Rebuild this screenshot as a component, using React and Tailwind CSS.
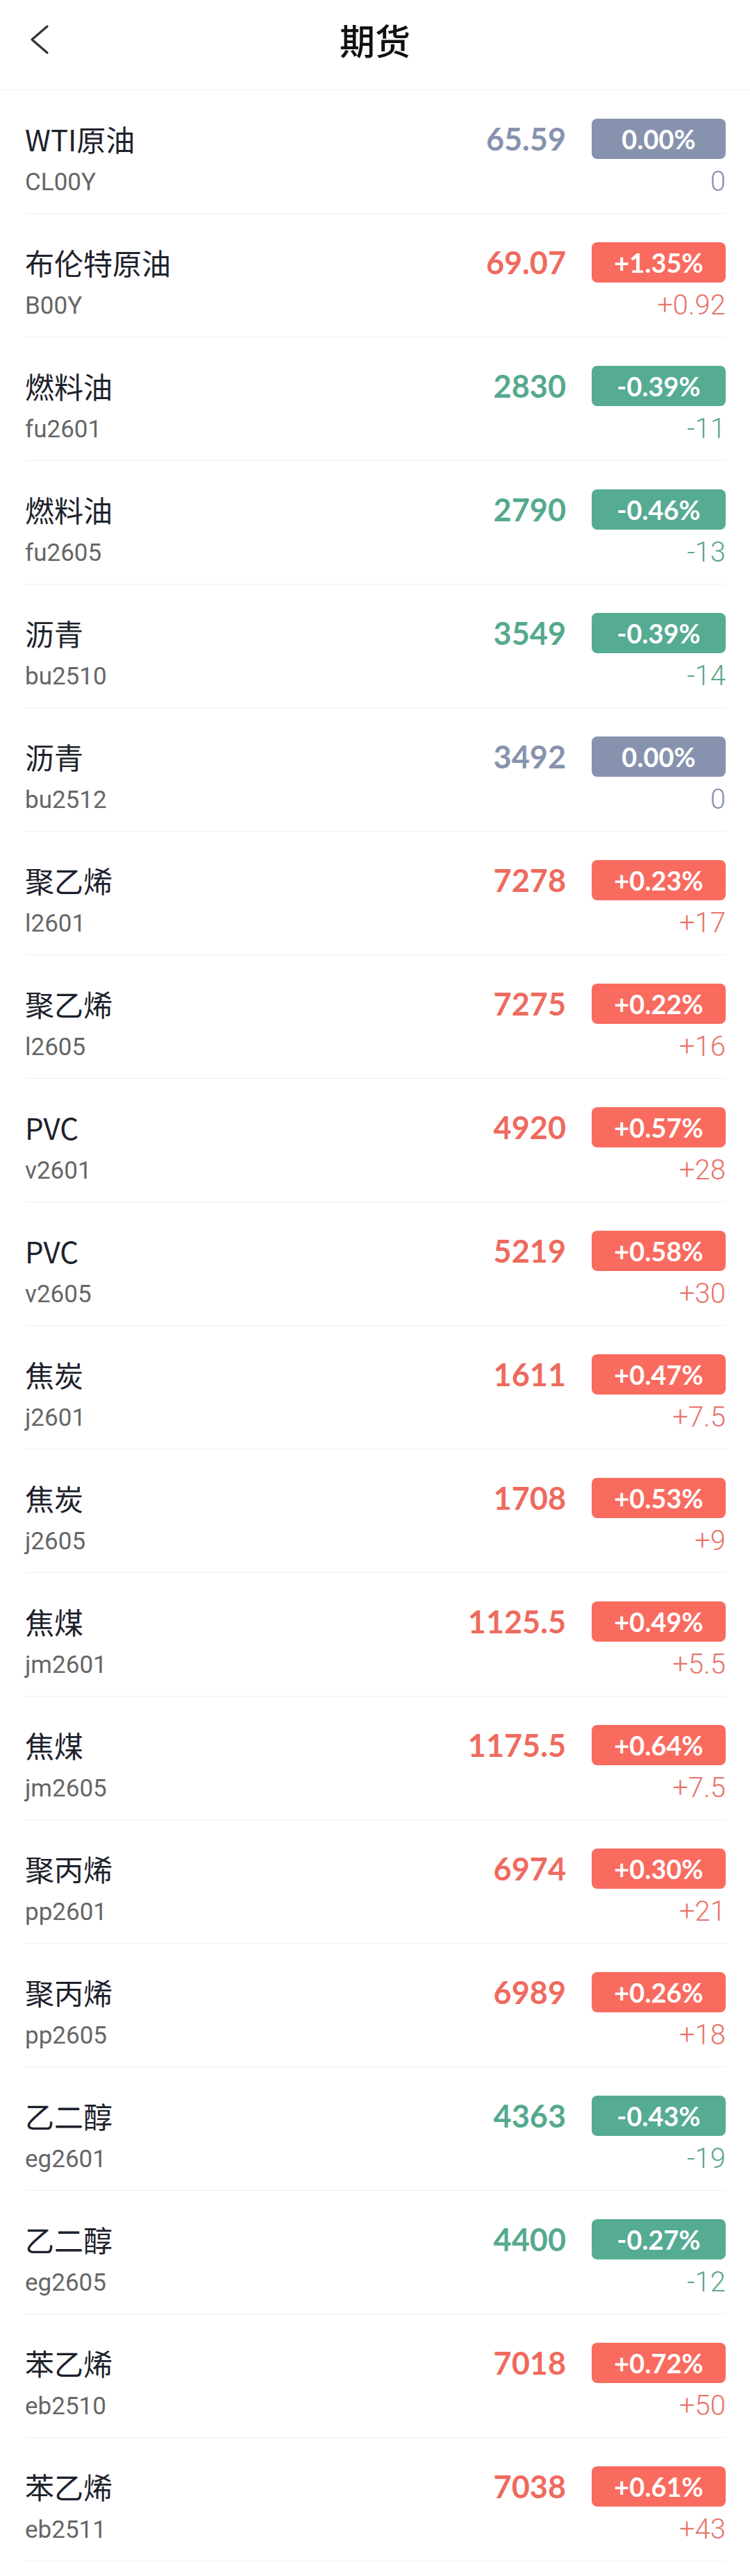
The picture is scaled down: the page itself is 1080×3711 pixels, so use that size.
const rows = [
  ['WTI原油', 'CL00Y', '65.59', '0.00%', '0', 'flat'],
  ['布伦特原油', 'B00Y', '69.07', '+1.35%', '+0.92', 'up'],
  ['燃料油', 'fu2601', '2830', '-0.39%', '-11', 'down'],
  ['燃料油', 'fu2605', '2790', '-0.46%', '-13', 'down'],
  ['沥青', 'bu2510', '3549', '-0.39%', '-14', 'down'],
  ['沥青', 'bu2512', '3492', '0.00%', '0', 'flat'],
  ['聚乙烯', 'l2601', '7278', '+0.23%', '+17', 'up'],
  ['聚乙烯', 'l2605', '7275', '+0.22%', '+16', 'up'],
  ['PVC', 'v2601', '4920', '+0.57%', '+28', 'up'],
  ['PVC', 'v2605', '5219', '+0.58%', '+30', 'up'],
  ['焦炭', 'j2601', '1611', '+0.47%', '+7.5', 'up'],
  ['焦炭', 'j2605', '1708', '+0.53%', '+9', 'up'],
  ['焦煤', 'jm2601', '1125.5', '+0.49%', '+5.5', 'up'],
  ['焦煤', 'jm2605', '1175.5', '+0.64%', '+7.5', 'up'],
  ['聚丙烯', 'pp2601', '6974', '+0.30%', '+21', 'up'],
  ['聚丙烯', 'pp2605', '6989', '+0.26%', '+18', 'up'],
  ['乙二醇', 'eg2601', '4363', '-0.43%', '-19', 'down'],
  ['乙二醇', 'eg2605', '4400', '-0.27%', '-12', 'down'],
  ['苯乙烯', 'eb2510', '7018', '+0.72%', '+50', 'up'],
  ['苯乙烯', 'eb2511', '7038', '+0.61%', '+43', 'up'],
];

const tone = {
  up: { price: 'text-[#ef6a5e]', badge: 'bg-[#f96b5f]', change: 'text-[#e6746a]' },
  down: { price: 'text-[#55a98f]', badge: 'bg-[#56ab93]', change: 'text-[#5ea68f]' },
  flat: { price: 'text-[#8793ae]', badge: 'bg-[#8793ae]', change: 'text-[#8793ae]' },
};

const Row = ({ name, code, price, pct, change, dir }) => {
  const t = tone[dir];
  return (
    <div className="h-[178px] mx-[36px] mr-[35px] pt-[41px] border-b border-[#efefef]">
      <div className="h-[58px] flex items-center justify-between">
        <span className="text-[42px] leading-none text-[#1d222c] font-['Noto_Sans_CJK_SC',sans-serif]">
          {name}
        </span>
        <div className="flex items-center gap-[37px]">
          <span className={`text-[45px] leading-none font-bold font-['Lato',sans-serif] ${t.price}`}>
            {price}
          </span>
          <span className={`w-[193px] h-[58px] rounded-[8px] flex items-center justify-center text-white text-[38px] font-bold font-['Lato',sans-serif] ${t.badge}`}>
            {pct}
          </span>
        </div>
      </div>
      <div className="h-[48px] mt-[9px] flex items-center justify-between">
        <span className="text-[35px] leading-none text-[#666666] font-['Roboto',sans-serif]">{code}</span>
        <span className={`text-[40px] leading-none font-light font-['Roboto',sans-serif] ${t.change}`}>
          {change}
        </span>
      </div>
    </div>
  );
};

export default function App() {
  return (
    <div className="w-[1080px] min-h-[3711px] bg-white">
      <header className="relative h-[130px] flex items-center justify-center border-b border-[#f0f0f0]">
        {/* back chevron */}
        <svg className="absolute left-[40px] top-[32px] w-[36px] h-[50px]" viewBox="0 0 36 50" fill="none">
          <polyline
            points="28,6 6,25 28,44"
            stroke="#333333"
            strokeWidth="3.2"
            strokeLinecap="round"
            strokeLinejoin="round"
          />
        </svg>
        <h1 className="text-[51px] leading-none font-medium text-[#111111] font-['Noto_Sans_CJK_SC',sans-serif] -mt-[14px]">
          期货
        </h1>
      </header>
      {rows.map((r, i) => (
        <Row key={i} name={r[0]} code={r[1]} price={r[2]} pct={r[3]} change={r[4]} dir={r[5]} />
      ))}
    </div>
  );
}
